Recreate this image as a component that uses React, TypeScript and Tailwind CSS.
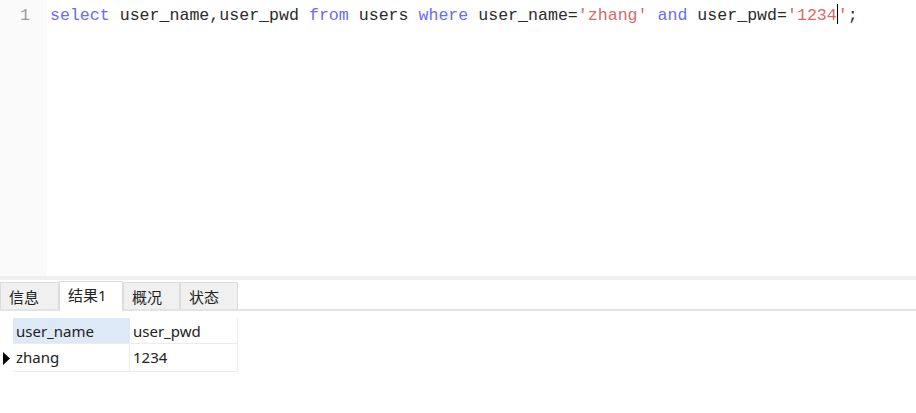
import React from 'react';

const kw = 'text-[#6b6bf5]';
const str = 'text-[#d46a6a]';

const App = () => {
  const tabs = ['信息', '结果1', '概况', '状态'];

  return (
    <div className="w-[916px] h-[413px] bg-white flex flex-col overflow-hidden" style={{ fontFamily: '"Noto Sans", "Noto Sans CJK SC", sans-serif' }}>
      {/* Editor */}
      <div className="h-[276px] flex">
        <div className="w-[47px] bg-[#fafafa] text-[#999] text-[16.6px] leading-[32px] font-['Liberation_Mono',monospace] pl-[20px]">1</div>
        <div className="pl-[3px] text-[16.6px] leading-[32px] font-['Liberation_Mono',monospace] text-[#2b2b2b] whitespace-pre">
          <span className={kw}>select</span> user_name,user_pwd <span className={kw}>from</span> users <span className={kw}>where</span> user_name=<span className={str}>'zhang'</span> <span className={kw}>and</span> user_pwd=<span className={str}>'1234</span><span className="inline-block w-px h-[20px] bg-black align-[-4px]" /><span className={str}>'</span>;
        </div>
      </div>
      <div className="h-[4px] bg-[#f0f0f0]" />

      {/* Tabs */}
      <div className="h-[31px] flex items-end border-b-2 border-[#e3e3e3] pt-[1px]">
        {tabs.map((t, i) =>
          i === 1 ? (
            <div key={t} className="w-[64px] h-[30px] -mb-[2px] bg-white border border-b-0 border-[#dcdcdc] pl-[8px] text-[15px] leading-[26px] text-[#222]">
              {t}
            </div>
          ) : (
            <div key={t} className={`${i === 0 ? 'w-[59px]' : i === 2 ? 'w-[57px]' : 'w-[58px]'} h-[27px] bg-[#f0f0f0] border border-b-0 border-[#dcdcdc] pl-[8px] text-[15px] leading-[28px] text-[#222]`}>
              {t}
            </div>
          )
        )}
      </div>

      {/* Result grid */}
      <div className="pt-[7px] pl-[3px] flex">
        <div className="w-[10px] flex flex-col">
          <div className="h-[26px]" />
          <div className="h-[28px] flex items-center">
            <svg width="7" height="13" viewBox="0 0 7 13"><path d="M0 0 L7 6.5 L0 13 Z" fill="#000" /></svg>
          </div>
        </div>
        <div className="text-[15px] text-[#222]">
          <div className="flex h-[26px] border-b border-[#ececec]">
            <div className="w-[117px] bg-[#dde9f7] pl-[3px] leading-[26px]">user_name</div>
            <div className="w-[108px] border-r border-[#ececec] pl-[3px] leading-[26px]">user_pwd</div>
          </div>
          <div className="flex h-[28px] border-b border-[#ececec]">
            <div className="w-[117px] border-r border-[#ececec] pl-[3px] leading-[27px]">zhang</div>
            <div className="w-[108px] border-r border-[#ececec] pl-[3px] leading-[27px]">1234</div>
          </div>
        </div>
      </div>
    </div>
  );
};

export default App;
